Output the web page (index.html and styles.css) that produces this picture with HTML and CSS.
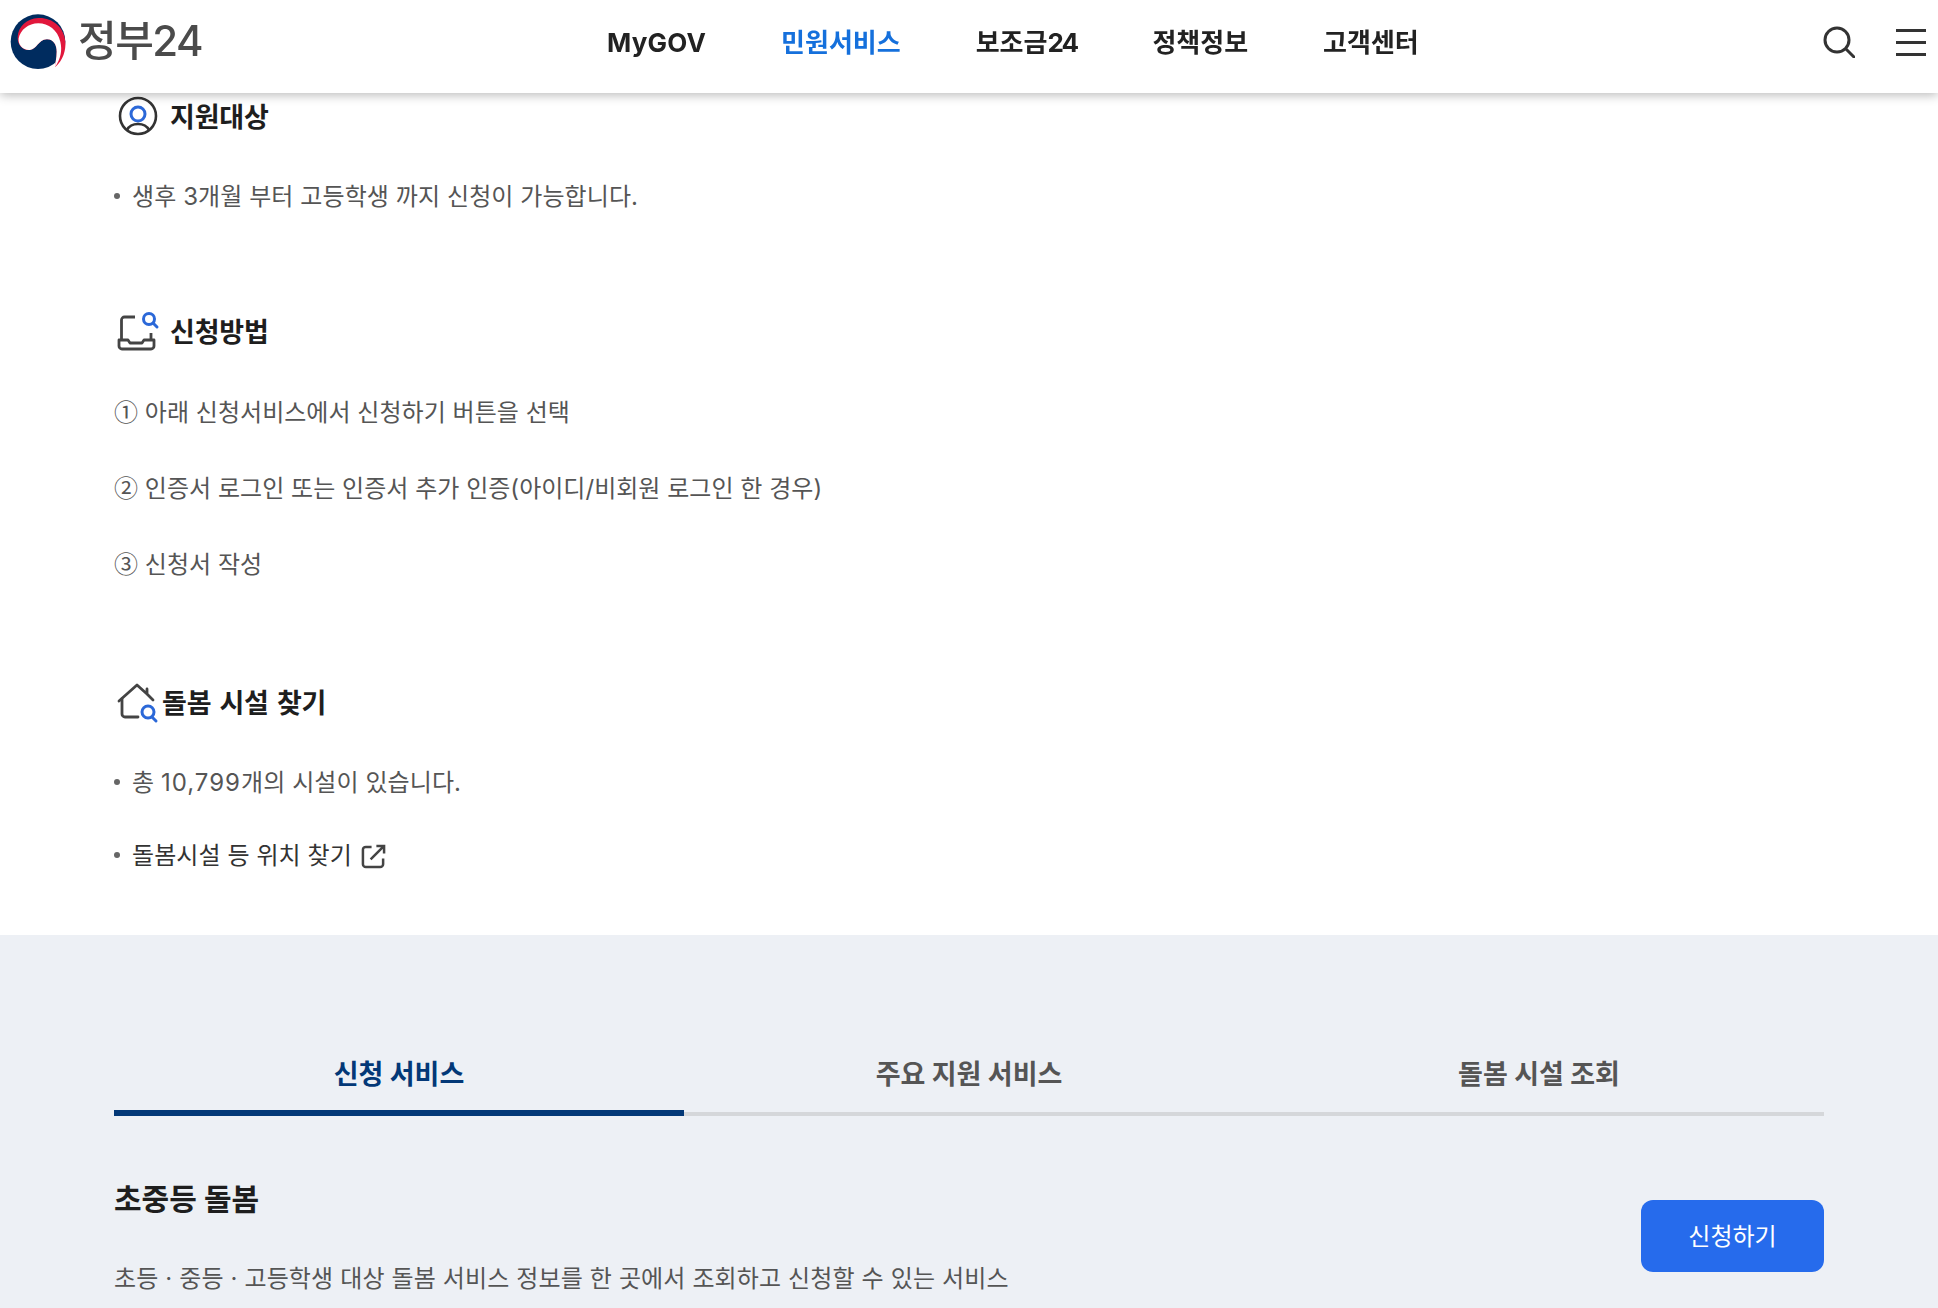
FILE: index.html
```html
<!DOCTYPE html>
<html lang="ko">
<head>
<meta charset="utf-8">
<title>정부24</title>
<link rel="stylesheet" href="styles.css">
</head>
<body>
<header class="site-header">
  <a class="logo">
    <svg class="logo-mark" viewBox="0 0 210 192" width="70" height="64">
      <circle cx="99" cy="95" r="82" fill="#002c5f"/>
      <path d="M150 172C175 150 183 120 181 95 178 50 140 22 100 24 65 25 40 50 38 80 36 105 55 122 75 120 95 118 100 90 125 88 145 87 155 105 155 125 155 145 150 160 150 172Z" fill="#e1173c"/>
      <path d="M150 172C168 145 172 120 166 95 158 60 130 40 100 40 70 40 46 60 41 85 38 105 55 122 75 120 95 118 100 90 125 88 145 87 155 105 155 125 155 145 150 160 150 172Z" fill="#fff"/>
    </svg>
    <span class="logo-text">정부24</span>
  </a>
  <nav class="main-nav">
    <a class="nav-latin">MyGOV</a>
    <a class="is-active">민원서비스</a>
    <a>보조금<span class="nav-digits">24</span></a>
    <a>정책정보</a>
    <a>고객센터</a>
  </nav>
  <div class="header-tools">
    <svg viewBox="0 0 32 32" width="32" height="32" fill="none" stroke="#333" stroke-width="3">
      <circle cx="14" cy="14" r="12"/>
      <path d="M23 23l8 8" stroke-linecap="round"/>
    </svg>
    <svg viewBox="0 0 30 27" width="30" height="27" fill="#333">
      <rect y="0" width="30" height="3"/>
      <rect y="12" width="30" height="3"/>
      <rect y="24" width="30" height="3"/>
    </svg>
  </div>
</header>

<main class="detail">
  <section class="block block-target">
    <h2 class="block-title">
      <svg class="ic" viewBox="0 0 40 40" width="40" height="40" fill="none">
        <circle cx="21" cy="21" r="18" stroke="#333" stroke-width="2.6"/>
        <circle cx="21" cy="19" r="7" stroke="#2b68d8" stroke-width="3"/>
        <path d="M10 35c2-4 6-6 11-6s9 2 11 6" stroke="#333" stroke-width="2.6"/>
      </svg>
      지원대상
    </h2>
    <p class="bullet">생후 3개월 부터 고등학생 까지 신청이 가능합니다.</p>
  </section>

  <section class="block block-method">
    <h2 class="block-title">
      <svg class="ic" viewBox="0 0 40 40" width="40" height="40" fill="none">
        <path d="M4.500 30V10a3 3 0 0 1 3-3H18M34 23v7" stroke="#444" stroke-width="2.800"/>
        <path d="M2 30h9l2 3h12l2-3h10v6a3 3 0 0 1-3 3H5a3 3 0 0 1-3-3z" stroke="#444" stroke-width="2.800" stroke-linejoin="round"/>
        <circle cx="32" cy="9" r="5.500" stroke="#2b68d8" stroke-width="3"/>
        <path d="M36 13l4 4" stroke="#2b68d8" stroke-width="3" stroke-linecap="round"/>
      </svg>
      신청방법
    </h2>
    <p class="step"><span class="num">①</span> 아래 신청서비스에서 신청하기 버튼을 선택</p>
    <p class="step"><span class="num">②</span> 인증서 로그인 또는 인증서 추가 인증(아이디/비회원 로그인 한 경우)</p>
    <p class="step"><span class="num">③</span> 신청서 작성</p>
  </section>

  <section class="block block-find">
    <h2 class="block-title title-tight">
      <svg class="ic" viewBox="0 0 40 40" width="40" height="40" fill="none">
        <path d="M2 20L20 4l10 9V8M30 13l6 6" stroke="#444" stroke-width="2.800" stroke-linecap="round" stroke-linejoin="round"/>
        <path d="M5 18v15a3 3 0 0 0 3 3h13" stroke="#444" stroke-width="2.800" stroke-linecap="round"/>
        <circle cx="31" cy="31" r="6" stroke="#2b68d8" stroke-width="3"/>
        <path d="M35 36l4 4" stroke="#2b68d8" stroke-width="3" stroke-linecap="round"/>
      </svg>
      돌봄 시설 찾기
    </h2>
    <p class="bullet">총 <span class="digits">10,799</span>개의 시설이 있습니다.</p>
    <p class="bullet bullet-link">돌봄시설 등 위치 찾기
      <svg class="ext" viewBox="0 0 26 26" width="25" height="25" fill="none" stroke="#444" stroke-width="2.600">
        <path d="M11 3H5a3 3 0 0 0-3 3v15a3 3 0 0 0 3 3h15a3 3 0 0 0 3-3v-6"/>
        <path d="M10 16L24 2M16 2h8v8"/>
      </svg>
    </p>
  </section>
</main>

<section class="services">
  <div class="tabs">
    <a class="tab is-active">신청 서비스</a>
    <a class="tab">주요 지원 서비스</a>
    <a class="tab">돌봄 시설 조회</a>
  </div>
  <div class="service-row">
    <div class="service-info">
      <h3>초중등 돌봄</h3>
      <p>초등 · 중등 · 고등학생 대상 돌봄 서비스 정보를 한 곳에서 조회하고 신청할 수 있는 서비스</p>
    </div>
    <a class="apply">신청하기</a>
  </div>
</section>
</body>
</html>
```

FILE: styles.css
```css
* { box-sizing: border-box; }
html, body { margin: 0; padding: 0; }
body {
  height: 1308px;
  overflow: hidden;
  background: #fff;
  color: #333;
  font-family: Inter, "Noto Sans CJK KR", "Noto Sans", sans-serif;
}
.site-header {
  position: fixed;
  top: 0;
  left: 0;
  right: 0;
  z-index: 10;
  height: 93px;
  background: #fff;
  box-shadow: 0 2px 10px rgba(0, 0, 0, .28);
  display: flex;
  align-items: center;
  padding: 0 12px 9px 5px;
}
.logo { display: flex; align-items: center; gap: 3px; width: 602px; }
.logo-mark { flex: none; }
.logo-text {
  font-size: 42px;
  font-weight: 500;
  letter-spacing: -1.5px;
  color: #4b4b4b;
  margin-bottom: 9px;
}
.main-nav {
  display: flex;
  align-items: baseline;
  gap: 75px;
  margin-bottom: 3px;
  font-size: 26px;
  font-weight: 700;
  color: #222;
}
.main-nav .is-active { color: #1570dc; }
.nav-latin { letter-spacing: .2px; }
.nav-digits { letter-spacing: -1.8px; }
.header-tools {
  margin-left: auto;
  display: flex;
  align-items: center;
  gap: 41px;
}
.detail { padding: 95px 114px 0; height: 935px; }
.block-title {
  display: flex;
  align-items: center;
  gap: 13px;
  margin: 0;
  height: 40px;
  font-size: 27px;
  font-weight: 700;
  letter-spacing: -.2px;
  word-spacing: 2px;
  color: #1e1e1e;
}
.title-tight { gap: 5px; }
.ic { flex: none; margin-left: 3px; overflow: visible; }
.block p {
  margin: 0;
  font-size: 24px;
  line-height: 36px;
  letter-spacing: .08px;
  color: #555;
}
.num { font-family: "Noto Sans CJK KR", sans-serif; line-height: 1; }
.digits { letter-spacing: 1px; }
.block-target { height: 215px; }
.block-target .bullet { margin-top: 44px; }
.block-method { height: 371px; }
.block-method .step { margin-top: 45px; letter-spacing: .03px; }
.block-method .step + .step { margin-top: 40px; }
.block-find .bullet { margin-top: 44px; }
.block-find .bullet + .bullet { margin-top: 37px; }
.bullet { position: relative; padding-left: 18px; }
.bullet::before {
  content: "";
  position: absolute;
  left: 0;
  top: 14px;
  width: 6px;
  height: 6px;
  border-radius: 50%;
  background: #666;
}
.block .bullet-link { color: #333; display: flex; align-items: center; gap: 9px; }
.services {
  background: #edf0f5;
  height: 373px;
  padding: 112px 114px 0;
}
.tabs { display: flex; }
.tab {
  flex: 1;
  text-align: center;
  height: 69px;
  font-size: 27px;
  font-weight: 700;
  line-height: 56px;
  color: #555;
  border-bottom: 4px solid #d5d7da;
}
.tab.is-active {
  color: #033877;
  border-bottom: 6px solid #033877;
}
.service-row { display: flex; justify-content: space-between; align-items: flex-start; }
.service-info h3 {
  margin: 62px 0 0;
  font-size: 30px;
  font-weight: 700;
  line-height: 42px;
  color: #1e1e1e;
}
.service-info p {
  margin: 41px 0 0;
  font-size: 24px;
  line-height: 36px;
  letter-spacing: .13px;
  color: #555;
}
.apply {
  margin-top: 84px;
  width: 183px;
  height: 72px;
  padding-bottom: 3px;
  border-radius: 12px;
  background: #266bec;
  color: #fff;
  font-size: 24px;
  display: flex;
  align-items: center;
  justify-content: center;
}
```
